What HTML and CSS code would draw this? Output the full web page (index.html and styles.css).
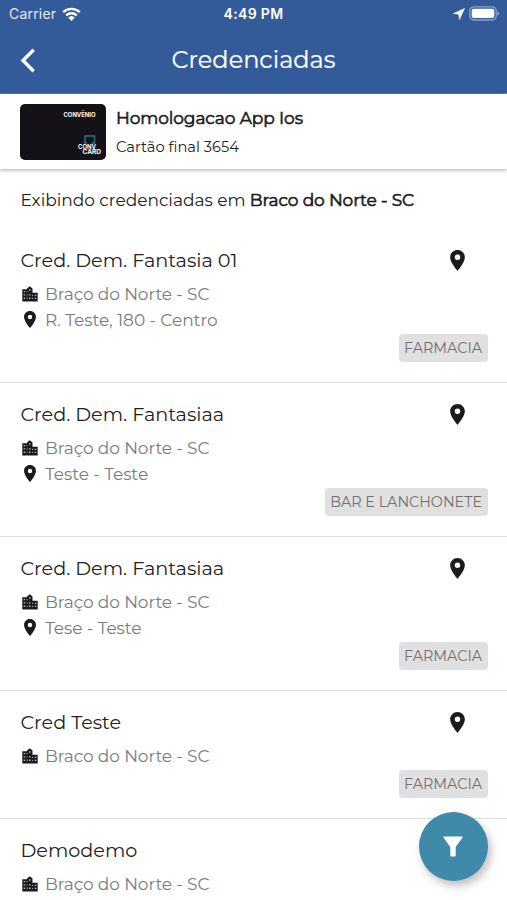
FILE: index.html
```html
<!DOCTYPE html>
<html lang="pt-BR">
<head>
<meta charset="utf-8">
<title>Credenciadas</title>
<link rel="stylesheet" href="styles.css">
</head>
<body>
<svg class="defs" width="0" height="0">
  <symbol id="pin" viewBox="5 2 14 20"><path fill-rule="evenodd" d="M12 2C8.100 2 5 5.100 5 9c0 5.200 7 13 7 13s7-7.800 7-13c0-3.900-3.100-7-7-7zm0 4.400a2.600 2.600 0 1 1 0 5.200 2.600 2.600 0 0 1 0-5.200z"/></symbol>
  <symbol id="city" viewBox="0 0 16 16"><path d="M.3 3.200H5V2.400L7.800.2l2.700 2.200v4.400h5.200v8.700H.3z"/><path fill="#b5b5b5" d="M1.700 5v1.300h1.500V5zm0 3.300v1.300h1.500V8.300zm0 3.300v1.300h1.500v-1.300zM4.700 5v1.300h.8V5zm0 3.300v1.300h.8V8.300zm0 3.300v1.300h.8v-1.300zM7 3.300v1.500h1.500V3.300zM7 8.300v1.300h1.500V8.300zm0 3.300v1.300h1.500v-1.300zM10.200 8.700v1.300h.9V8.700zm0 3.100v1.300h.9v-1.300zM12.800 8.700v1.300h1.500V8.700zm0 3.100v1.300h1.500v-1.300z"/></symbol>
</svg>
<header class="top">
  <div class="status">
    <div class="carrier"><span>Carrier</span>
      <svg width="19" height="14" viewBox="0 0 19 14" fill="none" stroke="#fff" stroke-width="2.300"><path d="M1.200 5.200a12 12 0 0 1 16.600 0M4.200 8.400a7.600 7.600 0 0 1 10.600 0"/><path fill="#fff" stroke="none" d="M6.200 10.600a4.800 4.800 0 0 1 6.600 0L9.500 13.900z"/></svg>
    </div>
    <span class="clock">4:49 PM</span>
    <div class="power">
      <svg width="12" height="12" viewBox="0 0 12 12"><path fill="#fff" stroke="#fff" stroke-width=".6" d="M11.500.5.5 5.600l5.300.6.600 5.300z"/></svg>
      <svg width="31" height="15" viewBox="0 0 31 15"><rect x=".8" y=".8" width="26.400" height="13.200" rx="4" fill="none" stroke="#8ba2ca" stroke-width="1.300"/><rect x="2.700" y="2.700" width="22.600" height="9.400" rx="2" fill="#fff"/><path fill="#8ba2ca" d="M28.500 5c2 .8 2 4 0 4.800z"/></svg>
    </div>
  </div>
  <div class="bar">
    <svg class="back" width="16" height="25" viewBox="0 0 16 25"><path d="M13.700 1.800 3 12.500l10.700 10.700" fill="none" stroke="#fff" stroke-width="3.400"/></svg>
    <h1>Credenciadas</h1>
  </div>
</header>
<section class="account">
  <svg class="card" width="86" height="56" viewBox="0 0 86 56"><rect width="86" height="56" rx="5" fill="#141216"/><path d="M67 39h-2v-7h9.500v7h-3" fill="none" stroke="#28708f" stroke-width="1.500"/><g class="card-text"><text x="43.500" y="13.300" textLength="32" lengthAdjust="spacingAndGlyphs">CONVÊNIO</text><text x="58" y="44.500" textLength="18" lengthAdjust="spacingAndGlyphs">CONV</text><text x="62.500" y="50" textLength="18.500" lengthAdjust="spacingAndGlyphs">CARD</text></g></svg>
  <div class="owner">
    <div class="holder strong">Homologacao App Ios</div>
    <div class="final">Cartão final 3654</div>
  </div>
</section>
<p class="showing">Exibindo credenciadas em <b class="strong">Braco do Norte - SC</b></p>
<main>
  <article>
    <div class="head"><h2>Cred. Dem. Fantasia 01</h2><svg class="map"><use href="#pin"/></svg></div>
    <div class="line"><svg class="city"><use href="#city"/></svg>Braço do Norte - SC</div>
    <div class="line address"><svg class="pin"><use href="#pin"/></svg>R. Teste, 180 - Centro</div>
    <div class="tag">FARMACIA</div>
  </article>
  <article>
    <div class="head"><h2>Cred. Dem. Fantasiaa</h2><svg class="map"><use href="#pin"/></svg></div>
    <div class="line"><svg class="city"><use href="#city"/></svg>Braço do Norte - SC</div>
    <div class="line address"><svg class="pin"><use href="#pin"/></svg>Teste - Teste</div>
    <div class="tag">BAR E LANCHONETE</div>
  </article>
  <article>
    <div class="head"><h2>Cred. Dem. Fantasiaa</h2><svg class="map"><use href="#pin"/></svg></div>
    <div class="line"><svg class="city"><use href="#city"/></svg>Braço do Norte - SC</div>
    <div class="line address"><svg class="pin"><use href="#pin"/></svg>Tese - Teste</div>
    <div class="tag">FARMACIA</div>
  </article>
  <article>
    <div class="head"><h2>Cred Teste</h2><svg class="map"><use href="#pin"/></svg></div>
    <div class="line"><svg class="city"><use href="#city"/></svg>Braco do Norte - SC</div>
    <div class="tag">FARMACIA</div>
  </article>
  <article>
    <div class="head"><h2>Demodemo</h2></div>
    <div class="line"><svg class="city"><use href="#city"/></svg>Braço do Norte - SC</div>
  </article>
</main>
<button class="filter" aria-label="Filtrar"><svg width="20" height="21" viewBox="0 0 20 21"><path fill="#fff" d="M1 .5h18q1 0 .6 1L12.700 11v8.500q0 1-1 1H8.300q-1 0-1-1V11L.4 1.500Q0 .5 1 .5z"/></svg></button>
</body>
</html>
```
FILE: styles.css
```css
* { box-sizing: border-box; }
body {
  margin: 0;
  height: 900px;
  overflow: hidden;
  background: #fff;
  color: #222;
  font-family: Montserrat, Inter, sans-serif;
}
svg { display: block; flex: none; }
.defs { position: absolute; }
h1, h2, p { margin: 0; font-weight: 400; }
.strong { font-weight: 400; color: #1c1c1c; -webkit-text-stroke: 0.6px #1c1c1c; }

.top { height: 94px; background: #345b99; color: #fff; border-bottom: 1px solid #5d7fb2; }
.status {
  display: grid;
  grid-template-columns: 1fr auto 1fr;
  align-items: center;
  height: 27px;
  padding: 0 7px 0 9px;
  font: 400 14px Inter, sans-serif;
}
.carrier, .power { display: flex; align-items: center; gap: 6px; }
.carrier { letter-spacing: 0.2px; color: #e6ecf6; }
.power { justify-content: flex-end; gap: 4px; }
.clock { margin-left: -2px; font-weight: 600; letter-spacing: 0.35px; }
.bar {
  display: grid;
  grid-template-columns: 40px 1fr 40px;
  align-items: center;
  height: 66px;
  padding: 0 20px;
}
h1 { grid-column: 2; font-size: 24px; line-height: 30px; text-align: center; -webkit-text-stroke: 0.2px #fff; }

.account {
  display: flex;
  align-items: center;
  gap: 10px;
  height: 75px;
  padding-left: 20px;
  box-shadow: 0 1px 4px rgba(0, 0, 0, 0.35);
}
.card-text { fill: #fff; font: 700 5.500px Inter, sans-serif; }
.holder { font-size: 17px; line-height: 24px; letter-spacing: -0.09px; }
.final { margin-top: 6px; font-size: 14.700px; line-height: 22px; }
.owner { padding-top: 1px; }
.showing { height: 60px; padding: 19px 20px 0 20.500px; font-size: 17px; line-height: 24px; letter-spacing: -0.02px; }
.showing .strong { letter-spacing: -0.12px; }

article { padding: 19px 20px 20px; border-bottom: 1px solid #dedede; }
.head { display: flex; justify-content: space-between; align-items: center; height: 24px; margin-bottom: 9px; padding: 0 22px 0 0.500px; }
h2 { font-size: 19.200px; line-height: 24px; }
.map { width: 15px; height: 21px; fill: #1b1b1b; }
.line {
  display: flex;
  align-items: center;
  height: 26px;
  color: #7c7c7c;
  font-size: 17px;
  letter-spacing: -0.11px;
}
.address { padding-bottom: 1px; letter-spacing: -0.06px; }
.city { width: 16px; height: 16px; margin: 0 7px 0 2px; fill: #1b1b1b; }
.pin { width: 12px; height: 17px; margin: 0 9px 0 4px; fill: #1b1b1b; }
.tag {
  width: fit-content;
  height: 28px;
  margin: 1px -0.500px 0 auto;
  padding: 0 5.500px;
  border-radius: 4px;
  background: #e0e0e0;
  color: #707070;
  font-size: 14.350px;
  line-height: 29px;
}
.filter {
  position: absolute;
  left: 418.500px;
  top: 811.500px;
  display: grid;
  place-items: center;
  width: 69px;
  height: 69px;
  padding: 0;
  border: 0;
  border-radius: 50%;
  background: #3f89a9;
  box-shadow: 3px 5px 8px rgba(0, 0, 0, 0.25);
}
```
